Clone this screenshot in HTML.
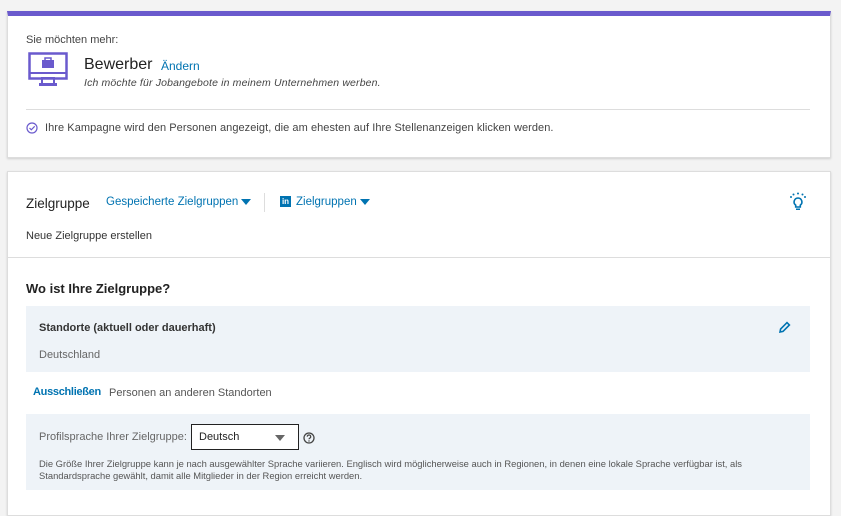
<!DOCTYPE html>
<html><head><meta charset="utf-8"><style>
*{margin:0;padding:0;box-sizing:border-box}
body{width:841px;height:506px;background:#f3f3f3;font-family:"Liberation Sans",sans-serif;color:#333;position:relative;overflow:hidden}
.a{position:absolute;white-space:nowrap}
.card{position:absolute;left:7px;width:824px;background:#fff;border:1px solid #ddd;box-shadow:0 1px 2px rgba(0,0,0,.15)}
.blue{color:#0073b1}
.tri{display:inline-block;width:0;height:0;border-left:5px solid transparent;border-right:5px solid transparent;border-top:6px solid #0073b1;vertical-align:middle;margin-left:3px}
</style></head><body>
<div class="card" style="top:11px;height:147px;border-top:5px solid #6a5acd"></div>
<div class="a" style="left:26px;top:34px;font-size:11px;color:#444">Sie möchten mehr:</div>
<svg class="a" style="left:28px;top:52px" width="40" height="36" viewBox="0 0 40 36"><rect x="1.5" y="1.5" width="37" height="25" fill="none" stroke="#6a5acd" stroke-width="2.5"/><line x1="1" y1="21" x2="39" y2="21" stroke="#6a5acd" stroke-width="2"/><rect x="14" y="26" width="12" height="6" fill="none" stroke="#6a5acd" stroke-width="2"/><rect x="11" y="31" width="18" height="3" fill="#6a5acd"/><rect x="14" y="8" width="12" height="8" fill="#6a5acd"/><rect x="17" y="6" width="6" height="3" fill="none" stroke="#6a5acd" stroke-width="1.5"/></svg>
<div class="a" style="left:84px;top:56px;font-size:16px;color:#222">Bewerber</div>
<div class="a blue" style="left:161px;top:59px;font-size:12px">Ändern</div>
<div class="a" style="left:84px;top:77px;font-size:10.5px;font-style:italic;color:#444;letter-spacing:0.15px">Ich möchte für Jobangebote in meinem Unternehmen werben.</div>
<div class="a" style="left:26px;top:109px;width:784px;height:1px;background:#ddd"></div>
<svg class="a" style="left:26px;top:122px" width="12" height="12" viewBox="0 0 12 12"><circle cx="6" cy="6" r="5" fill="none" stroke="#6a5acd" stroke-width="1.2"/><path d="M3.5 6l1.8 1.8L8.7 4.3" fill="none" stroke="#6a5acd" stroke-width="1.2"/></svg>
<div class="a" style="left:45px;top:122px;font-size:11px;color:#444;letter-spacing:0.06px">Ihre Kampagne wird den Personen angezeigt, die am ehesten auf Ihre Stellenanzeigen klicken werden.</div>

<div class="card" style="top:171px;height:345px"></div>
<div class="a" style="left:26px;top:196px;font-size:13.5px;color:#222">Zielgruppe</div>
<div class="a blue" style="left:106px;top:196px;font-size:11.5px">Gespeicherte Zielgruppen<span class="tri"></span></div>
<div class="a" style="left:264px;top:193px;width:1px;height:19px;background:#ddd"></div>
<div class="a" style="left:280px;top:196px;width:11px;height:11px;background:#0073b1;color:#fff;font-size:8px;font-weight:bold;line-height:11px;text-align:center">in</div>
<div class="a blue" style="left:296px;top:196px;font-size:11.5px">Zielgruppen<span class="tri"></span></div>
<svg class="a" style="left:789px;top:192px" width="18" height="20" viewBox="0 0 18 20"><path d="M9 6a4 4 0 0 0-2.3 7.2V15h4.6v-1.8A4 4 0 0 0 9 6z" fill="none" stroke="#0073b1" stroke-width="1.6"/><rect x="7" y="16.5" width="4" height="1.5" fill="#0073b1"/><circle cx="9" cy="1.5" r="1" fill="#0073b1"/><circle cx="4.5" cy="2.5" r="1" fill="#0073b1"/><circle cx="13.5" cy="2.5" r="1" fill="#0073b1"/><circle cx="2" cy="5" r="1" fill="#0073b1"/><circle cx="16" cy="5" r="1" fill="#0073b1"/></svg>
<div class="a" style="left:26px;top:230px;font-size:11px;color:#333">Neue Zielgruppe erstellen</div>
<div class="a" style="left:8px;top:257px;width:822px;height:1px;background:#ddd"></div>
<div class="a" style="left:26px;top:281px;font-size:13px;font-weight:bold;color:#222">Wo ist Ihre Zielgruppe?</div>
<div class="a" style="left:26px;top:306px;width:784px;height:66px;background:#eef3f8"></div>
<div class="a" style="left:39px;top:322px;font-size:11px;font-weight:bold;color:#333">Standorte (aktuell oder dauerhaft)</div>
<svg class="a" style="left:778px;top:321px" width="13" height="13" viewBox="0 0 13 13"><path d="M2 11l.6-3L9 1.6l2.4 2.4L5 10.4z" fill="none" stroke="#0073b1" stroke-width="1.6"/><path d="M1.5 11.5l2.5-.6-1.9-1.9z" fill="#0073b1"/></svg>
<div class="a" style="left:39px;top:349px;font-size:11px;color:#666">Deutschland</div>
<div class="a blue" style="left:33px;top:386px;font-size:11px;font-weight:bold;letter-spacing:-0.3px">Ausschließen</div>
<div class="a" style="left:109px;top:387px;font-size:11px;color:#555">Personen an anderen Standorten</div>
<div class="a" style="left:26px;top:414px;width:784px;height:76px;background:#eef3f8"></div>
<div class="a" style="left:39px;top:431px;font-size:11px;color:#666">Profilsprache Ihrer Zielgruppe:</div>
<div class="a" style="left:191px;top:424px;width:108px;height:26px;border:1px solid #222;background:#fff"></div>
<div class="a" style="left:199px;top:431px;font-size:11px;color:#222">Deutsch</div>
<div class="a" style="left:275px;top:435px;width:0;height:0;border-left:5px solid transparent;border-right:5px solid transparent;border-top:6px solid #666"></div>
<svg class="a" style="left:303px;top:432px" width="12" height="12" viewBox="0 0 12 12"><circle cx="6" cy="6" r="5" fill="none" stroke="#444" stroke-width="1.3"/><path d="M4.3 4.7a1.7 1.7 0 1 1 2.4 1.5c-.5.3-.7.6-.7 1.1" fill="none" stroke="#444" stroke-width="1.2"/><circle cx="6" cy="9" r=".7" fill="#444"/></svg>
<div class="a" style="left:39px;top:458px;font-size:9.4px;color:#555;line-height:12px">Die Größe Ihrer Zielgruppe kann je nach ausgewählter Sprache variieren. Englisch wird möglicherweise auch in Regionen, in denen eine lokale Sprache verfügbar ist, als<br>Standardsprache gewählt, damit alle Mitglieder in der Region erreicht werden.</div>
</body></html>
